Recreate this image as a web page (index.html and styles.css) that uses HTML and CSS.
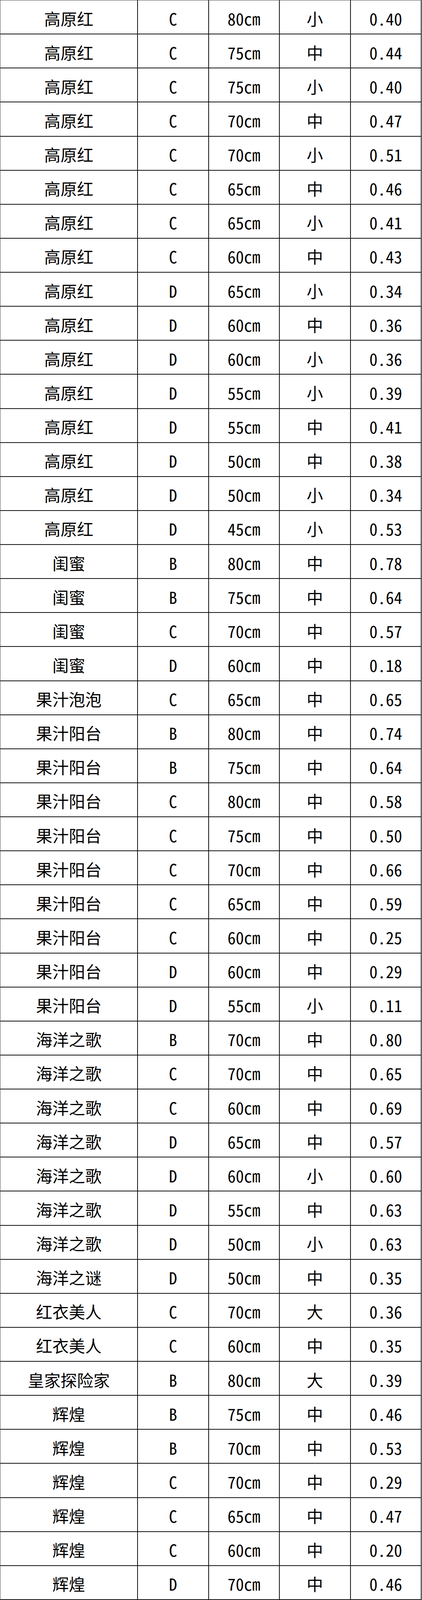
FILE: index.html
```html
<!DOCTYPE html>
<html lang="zh-CN">
<head>
<meta charset="utf-8">
<title>表格</title>
<link rel="stylesheet" href="styles.css">
</head>
<body>
<div class="sheet">
<div class="row"><div class="c name">高原红</div><div class="c">C</div><div class="c">80cm</div><div class="c">小</div><div class="c">0.40</div></div>
<div class="row"><div class="c name">高原红</div><div class="c">C</div><div class="c">75cm</div><div class="c">中</div><div class="c">0.44</div></div>
<div class="row"><div class="c name">高原红</div><div class="c">C</div><div class="c">75cm</div><div class="c">小</div><div class="c">0.40</div></div>
<div class="row"><div class="c name">高原红</div><div class="c">C</div><div class="c">70cm</div><div class="c">中</div><div class="c">0.47</div></div>
<div class="row"><div class="c name">高原红</div><div class="c">C</div><div class="c">70cm</div><div class="c">小</div><div class="c">0.51</div></div>
<div class="row"><div class="c name">高原红</div><div class="c">C</div><div class="c">65cm</div><div class="c">中</div><div class="c">0.46</div></div>
<div class="row"><div class="c name">高原红</div><div class="c">C</div><div class="c">65cm</div><div class="c">小</div><div class="c">0.41</div></div>
<div class="row"><div class="c name">高原红</div><div class="c">C</div><div class="c">60cm</div><div class="c">中</div><div class="c">0.43</div></div>
<div class="row"><div class="c name">高原红</div><div class="c">D</div><div class="c">65cm</div><div class="c">小</div><div class="c">0.34</div></div>
<div class="row"><div class="c name">高原红</div><div class="c">D</div><div class="c">60cm</div><div class="c">中</div><div class="c">0.36</div></div>
<div class="row"><div class="c name">高原红</div><div class="c">D</div><div class="c">60cm</div><div class="c">小</div><div class="c">0.36</div></div>
<div class="row"><div class="c name">高原红</div><div class="c">D</div><div class="c">55cm</div><div class="c">小</div><div class="c">0.39</div></div>
<div class="row"><div class="c name">高原红</div><div class="c">D</div><div class="c">55cm</div><div class="c">中</div><div class="c">0.41</div></div>
<div class="row"><div class="c name">高原红</div><div class="c">D</div><div class="c">50cm</div><div class="c">中</div><div class="c">0.38</div></div>
<div class="row"><div class="c name">高原红</div><div class="c">D</div><div class="c">50cm</div><div class="c">小</div><div class="c">0.34</div></div>
<div class="row"><div class="c name">高原红</div><div class="c">D</div><div class="c">45cm</div><div class="c">小</div><div class="c">0.53</div></div>
<div class="row"><div class="c name">闺蜜</div><div class="c">B</div><div class="c">80cm</div><div class="c">中</div><div class="c">0.78</div></div>
<div class="row"><div class="c name">闺蜜</div><div class="c">B</div><div class="c">75cm</div><div class="c">中</div><div class="c">0.64</div></div>
<div class="row"><div class="c name">闺蜜</div><div class="c">C</div><div class="c">70cm</div><div class="c">中</div><div class="c">0.57</div></div>
<div class="row"><div class="c name">闺蜜</div><div class="c">D</div><div class="c">60cm</div><div class="c">中</div><div class="c">0.18</div></div>
<div class="row"><div class="c name">果汁泡泡</div><div class="c">C</div><div class="c">65cm</div><div class="c">中</div><div class="c">0.65</div></div>
<div class="row"><div class="c name">果汁阳台</div><div class="c">B</div><div class="c">80cm</div><div class="c">中</div><div class="c">0.74</div></div>
<div class="row"><div class="c name">果汁阳台</div><div class="c">B</div><div class="c">75cm</div><div class="c">中</div><div class="c">0.64</div></div>
<div class="row"><div class="c name">果汁阳台</div><div class="c">C</div><div class="c">80cm</div><div class="c">中</div><div class="c">0.58</div></div>
<div class="row"><div class="c name">果汁阳台</div><div class="c">C</div><div class="c">75cm</div><div class="c">中</div><div class="c">0.50</div></div>
<div class="row"><div class="c name">果汁阳台</div><div class="c">C</div><div class="c">70cm</div><div class="c">中</div><div class="c">0.66</div></div>
<div class="row"><div class="c name">果汁阳台</div><div class="c">C</div><div class="c">65cm</div><div class="c">中</div><div class="c">0.59</div></div>
<div class="row"><div class="c name">果汁阳台</div><div class="c">C</div><div class="c">60cm</div><div class="c">中</div><div class="c">0.25</div></div>
<div class="row"><div class="c name">果汁阳台</div><div class="c">D</div><div class="c">60cm</div><div class="c">中</div><div class="c">0.29</div></div>
<div class="row"><div class="c name">果汁阳台</div><div class="c">D</div><div class="c">55cm</div><div class="c">小</div><div class="c">0.11</div></div>
<div class="row"><div class="c name">海洋之歌</div><div class="c">B</div><div class="c">70cm</div><div class="c">中</div><div class="c">0.80</div></div>
<div class="row"><div class="c name">海洋之歌</div><div class="c">C</div><div class="c">70cm</div><div class="c">中</div><div class="c">0.65</div></div>
<div class="row"><div class="c name">海洋之歌</div><div class="c">C</div><div class="c">60cm</div><div class="c">中</div><div class="c">0.69</div></div>
<div class="row"><div class="c name">海洋之歌</div><div class="c">D</div><div class="c">65cm</div><div class="c">中</div><div class="c">0.57</div></div>
<div class="row"><div class="c name">海洋之歌</div><div class="c">D</div><div class="c">60cm</div><div class="c">小</div><div class="c">0.60</div></div>
<div class="row"><div class="c name">海洋之歌</div><div class="c">D</div><div class="c">55cm</div><div class="c">中</div><div class="c">0.63</div></div>
<div class="row"><div class="c name">海洋之歌</div><div class="c">D</div><div class="c">50cm</div><div class="c">小</div><div class="c">0.63</div></div>
<div class="row"><div class="c name">海洋之谜</div><div class="c">D</div><div class="c">50cm</div><div class="c">中</div><div class="c">0.35</div></div>
<div class="row"><div class="c name">红衣美人</div><div class="c">C</div><div class="c">70cm</div><div class="c">大</div><div class="c">0.36</div></div>
<div class="row"><div class="c name">红衣美人</div><div class="c">C</div><div class="c">60cm</div><div class="c">中</div><div class="c">0.35</div></div>
<div class="row"><div class="c name">皇家探险家</div><div class="c">B</div><div class="c">80cm</div><div class="c">大</div><div class="c">0.39</div></div>
<div class="row"><div class="c name">辉煌</div><div class="c">B</div><div class="c">75cm</div><div class="c">中</div><div class="c">0.46</div></div>
<div class="row"><div class="c name">辉煌</div><div class="c">B</div><div class="c">70cm</div><div class="c">中</div><div class="c">0.53</div></div>
<div class="row"><div class="c name">辉煌</div><div class="c">C</div><div class="c">70cm</div><div class="c">中</div><div class="c">0.29</div></div>
<div class="row"><div class="c name">辉煌</div><div class="c">C</div><div class="c">65cm</div><div class="c">中</div><div class="c">0.47</div></div>
<div class="row"><div class="c name">辉煌</div><div class="c">C</div><div class="c">60cm</div><div class="c">中</div><div class="c">0.20</div></div>
<div class="row"><div class="c name">辉煌</div><div class="c">D</div><div class="c">70cm</div><div class="c">中</div><div class="c">0.46</div></div>
</div>
</body>
</html>
```
FILE: styles.css
```css
html, body {
  margin: 0;
  padding: 0;
  height: 100%;
  background: #ffffff;
  overflow: hidden;
}

.sheet {
  width: 1079px;
  height: 100vh;
  display: flex;
  flex-direction: column;
  border-top: 1px solid #444;
  border-left: 1px solid #444;
  box-sizing: border-box;
  font-family: "Noto Sans CJK SC", "Noto Sans", sans-serif;
  font-feature-settings: "hwid" 1;
  font-size: 42px;
  color: #000;
}

.row {
  flex: 1 1 0;
  min-height: 0;
  display: grid;
  grid-template-columns: 352px 181.5px 181.5px 181.5px 181.5px;
}

.c {
  display: flex;
  align-items: center;
  justify-content: center;
  box-sizing: border-box;
  min-height: 0;
  border-right: 2px solid #111;
  border-bottom: 2px solid #111;
  padding-top: 6px;
  line-height: 1;
  white-space: nowrap;
}
```
